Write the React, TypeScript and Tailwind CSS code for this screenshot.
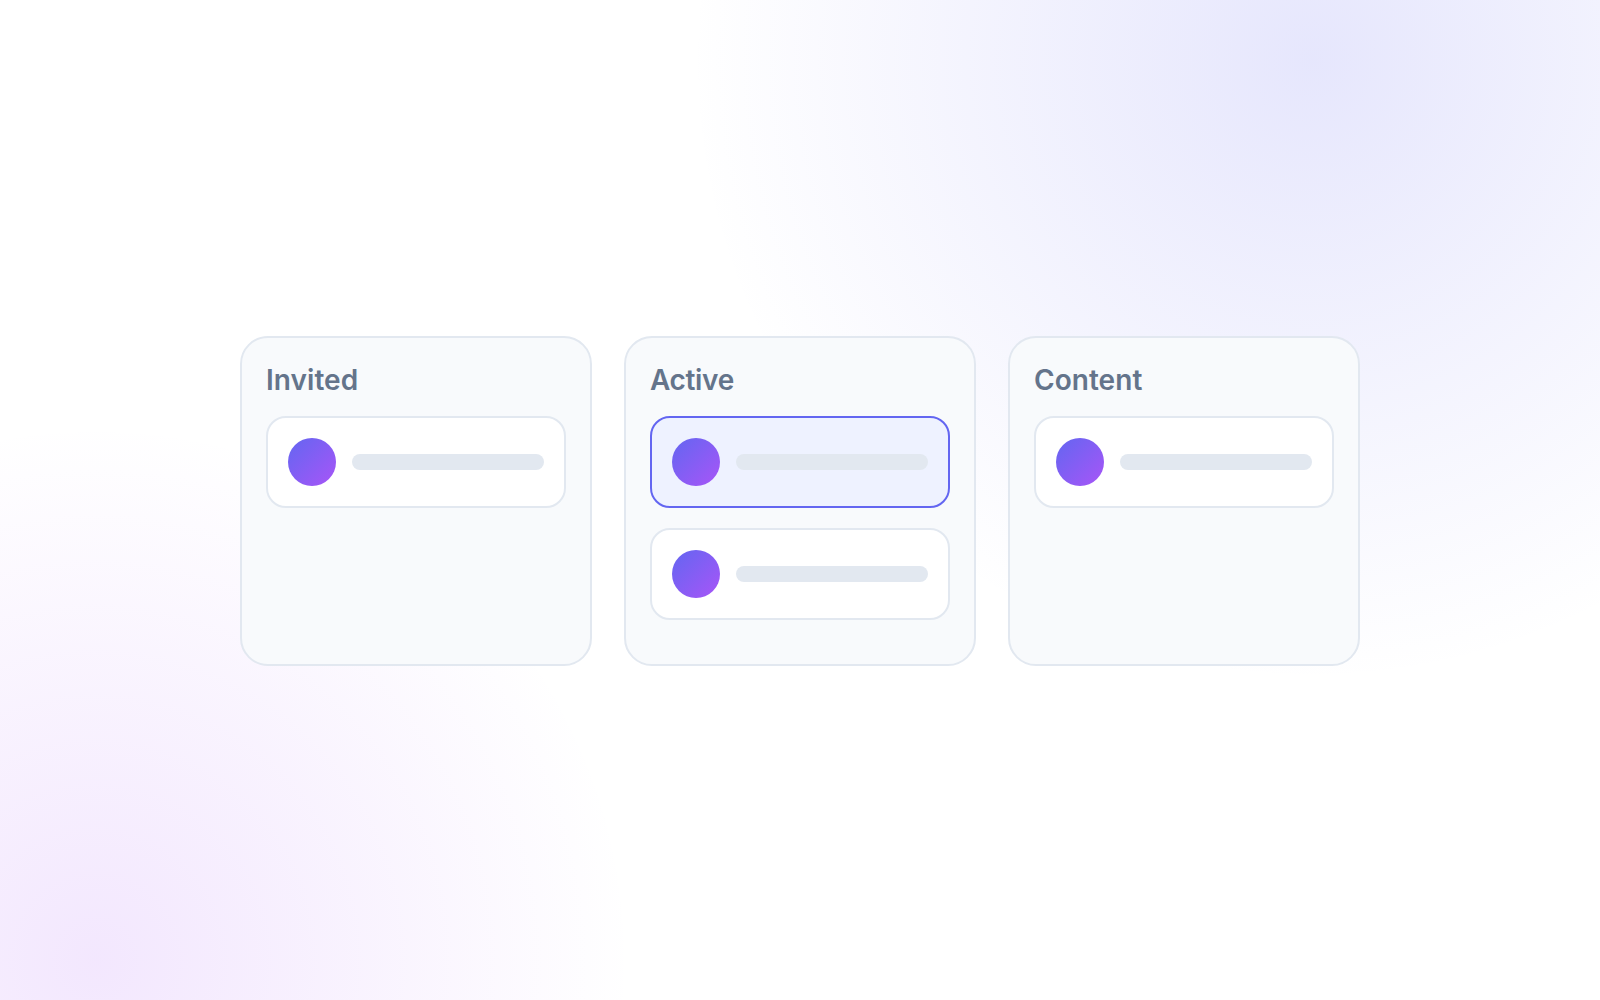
type Card = { active?: boolean };
type Column = { title: string; tracking: string; cards: Card[] };

const columns: Column[] = [
  { title: "Invited", tracking: "tracking-[0.05px]", cards: [{}] },
  { title: "Active", tracking: "tracking-[-0.35px]", cards: [{ active: true }, {}] },
  { title: "Content", tracking: "tracking-[0.05px]", cards: [{}] },
];

function MemberCard({ active }: Card) {
  return (
    <div
      className={
        active
          ? "mb-5 flex items-center gap-4 rounded-[20px] border-2 border-[#6366f1] bg-[#eef2ff] p-5"
          : "mb-5 flex items-center gap-4 rounded-[20px] border-2 border-[#e2e8f0] bg-white p-5"
      }
    >
      <div className="size-12 shrink-0 rounded-full bg-[linear-gradient(135deg,#6366f1,#a855f7)]" />
      <div className="h-4 flex-1 rounded-lg bg-[#e2e8f0]" />
    </div>
  );
}

export default function App() {
  return (
    <main className="flex h-[1000px] w-[1600px] items-start justify-center gap-8 overflow-hidden bg-white bg-[radial-gradient(circle_at_82%_6%,rgba(99,102,241,0.16),transparent_38.5%),radial-gradient(circle_at_6%_96%,rgba(168,85,247,0.14),transparent_30%)] pt-[336px] font-['Inter',sans-serif]">
      {columns.map((column) => (
        <section
          key={column.title}
          className="h-[330px] w-[352px] rounded-[28px] border-2 border-[#e2e8f0] bg-[#f8fafc] p-6"
        >
          <h2 className={`mb-[19px] pt-px text-[28px] leading-[34px] font-semibold text-[#64748b] ${column.tracking}`}>
            {column.title}
          </h2>
          {column.cards.map((card, i) => (
            <MemberCard key={i} active={card.active} />
          ))}
        </section>
      ))}
    </main>
  );
}
